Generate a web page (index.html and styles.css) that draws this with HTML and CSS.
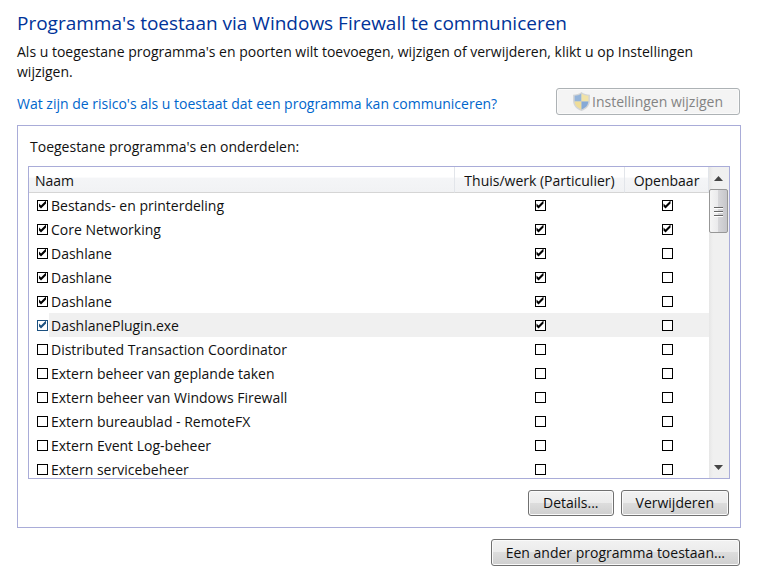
FILE: index.html
```
<!DOCTYPE html>
<html lang="nl">
<head>
    <meta charset="UTF-8">
    <meta name="viewport" content="width=device-width, initial-scale=1.0">
    <title>Windows Firewall</title>
    <link rel="stylesheet" href="styles.css">
</head>
<body>
    <main class="page">
        <h1>Programma's toestaan via Windows Firewall te communiceren</h1>
        <p class="intro">Als u toegestane programma's en poorten wilt toevoegen, wijzigen of verwijderen, klikt u op Instellingen wijzigen.</p>
        <div class="toolbar">
            <a class="help-link" href="#">Wat zijn de risico's als u toestaat dat een programma kan communiceren?</a>
            <button class="btn" id="change" disabled>
                <svg class="shield" width="17" height="19" viewBox="0 0 16 18" aria-hidden="true">
                    <path d="M8 0C6 2 3 2.500 0 2.500V8C0 13 3 16 8 18C13 16 16 13 16 8V2.500C13 2.500 10 2 8 0Z" fill="#d3d5d6"/>
                    <path d="M8 1.500C6 3 4 3.500 1.500 3.500V9H8Z" fill="#94b4da"/>
                    <path d="M8 1.500C10 3 12 3.500 14.500 3.500V9H8Z" fill="#f1e3a8"/>
                    <path d="M1.500 9C2 13 4 15 8 16.500V9Z" fill="#efdd98"/>
                    <path d="M14.500 9C14 13 12 15 8 16.500V9Z" fill="#86a9d6"/>
                </svg>
                <span>Instellingen wijzigen</span>
            </button>
        </div>

        <section class="panel">
            <h2>Toegestane programma's en onderdelen:</h2>
            <div class="list">
                <div class="list-view">
                    <table>
                        <thead>
                            <tr>
                                <th class="name" scope="col">Naam</th>
                                <th class="private" scope="col">Thuis/werk (Particulier)</th>
                                <th class="public" scope="col">Openbaar</th>
                            </tr>
                        </thead>
                        <tbody>
                            <tr>
                                <td><label><input type="checkbox" checked><span>Bestands- en printerdeling</span></label></td>
                                <td><input type="checkbox" aria-label="Thuis/werk" checked></td>
                                <td><input type="checkbox" aria-label="Openbaar" checked></td>
                            </tr>
                            <tr>
                                <td><label><input type="checkbox" checked><span>Core Networking</span></label></td>
                                <td><input type="checkbox" aria-label="Thuis/werk" checked></td>
                                <td><input type="checkbox" aria-label="Openbaar" checked></td>
                            </tr>
                            <tr>
                                <td><label><input type="checkbox" checked><span>Dashlane</span></label></td>
                                <td><input type="checkbox" aria-label="Thuis/werk" checked></td>
                                <td><input type="checkbox" aria-label="Openbaar"></td>
                            </tr>
                            <tr>
                                <td><label><input type="checkbox" checked><span>Dashlane</span></label></td>
                                <td><input type="checkbox" aria-label="Thuis/werk" checked></td>
                                <td><input type="checkbox" aria-label="Openbaar"></td>
                            </tr>
                            <tr>
                                <td><label><input type="checkbox" checked><span>Dashlane</span></label></td>
                                <td><input type="checkbox" aria-label="Thuis/werk" checked></td>
                                <td><input type="checkbox" aria-label="Openbaar"></td>
                            </tr>
                            <tr class="selected">
                                <td><label><input type="checkbox" checked><span>DashlanePlugin.exe</span></label></td>
                                <td><input type="checkbox" aria-label="Thuis/werk" checked></td>
                                <td><input type="checkbox" aria-label="Openbaar"></td>
                            </tr>
                            <tr>
                                <td><label><input type="checkbox"><span>Distributed Transaction Coordinator</span></label></td>
                                <td><input type="checkbox" aria-label="Thuis/werk"></td>
                                <td><input type="checkbox" aria-label="Openbaar"></td>
                            </tr>
                            <tr>
                                <td><label><input type="checkbox"><span>Extern beheer van geplande taken</span></label></td>
                                <td><input type="checkbox" aria-label="Thuis/werk"></td>
                                <td><input type="checkbox" aria-label="Openbaar"></td>
                            </tr>
                            <tr>
                                <td><label><input type="checkbox"><span>Extern beheer van Windows Firewall</span></label></td>
                                <td><input type="checkbox" aria-label="Thuis/werk"></td>
                                <td><input type="checkbox" aria-label="Openbaar"></td>
                            </tr>
                            <tr>
                                <td><label><input type="checkbox"><span>Extern bureaublad - RemoteFX</span></label></td>
                                <td><input type="checkbox" aria-label="Thuis/werk"></td>
                                <td><input type="checkbox" aria-label="Openbaar"></td>
                            </tr>
                            <tr>
                                <td><label><input type="checkbox"><span>Extern Event Log-beheer</span></label></td>
                                <td><input type="checkbox" aria-label="Thuis/werk"></td>
                                <td><input type="checkbox" aria-label="Openbaar"></td>
                            </tr>
                            <tr>
                                <td><label><input type="checkbox"><span>Extern servicebeheer</span></label></td>
                                <td><input type="checkbox" aria-label="Thuis/werk"></td>
                                <td><input type="checkbox" aria-label="Openbaar"></td>
                            </tr>
                        </tbody>
                    </table>
                </div>
                <div class="scrollbar">
                    <button class="arrow" aria-label="Omhoog">
                        <svg width="9" height="5" viewBox="0 0 9 5"><path d="M0 5L4.500 0L9 5Z" fill="#444"/></svg>
                    </button>
                    <div class="thumb">
                        <svg width="9" height="11" viewBox="0 0 9 11"><path d="M0 1.500H9M0 5.500H9M0 9.500H9" stroke="#666"/><path d="M0 2.500H9M0 6.500H9M0 10.500H9" stroke="#fff"/></svg>
                    </div>
                    <button class="arrow down" aria-label="Omlaag">
                        <svg width="9" height="5" viewBox="0 0 9 5"><path d="M0 0L4.500 5L9 0Z" fill="#444"/></svg>
                    </button>
                </div>
            </div>
            <div class="actions">
                <button class="btn">Details...</button>
                <button class="btn">Verwijderen</button>
            </div>
        </section>

        <div class="footer">
            <button class="btn">Een ander programma toestaan...</button>
        </div>
    </main>
</body>
</html>
```
FILE: styles.css
```
* {
    box-sizing: border-box;
}

body {
    margin: 0;
    background-color: #fff;
    color: #111;
    font-family: "Segoe UI", "Open Sans", "Noto Sans", sans-serif;
    font-size: 14px;
    line-height: 20px;
}

.page {
    padding: 10px 32px 14px 17px;
}

h1 {
    margin: 0 0 6px;
    color: #003399;
    font-size: 19px;
    font-weight: normal;
    line-height: 26px;
}

.intro {
    margin: 0 0 6px;
}

.toolbar {
    display: flex;
    justify-content: space-between;
    align-items: center;
    margin: 0 1px 10px 0;
}

.help-link {
    color: #0066cc;
    text-decoration: none;
    padding-top: 4px;
}

.btn {
    display: flex;
    align-items: center;
    justify-content: center;
    height: 27px;
    padding: 0 14px;
    border: 1px solid #707070;
    border-radius: 3px;
    background: linear-gradient(#f2f2f2, #ebebeb 50%, #dddddd 50%, #cfcfcf);
    box-shadow: inset 0 0 0 1px #fafafa;
    color: #111;
    font: inherit;
    white-space: nowrap;
}

.btn:disabled {
    padding: 0 16px;
    border-color: #adb2b5;
    background: #f4f4f4;
    color: #838383;
}

.shield {
    margin-right: 2px;
}

.panel {
    padding: 11px 10px;
    border: 1px solid #a9acd8;
}

h2 {
    margin: 0 2px 9px;
    font-size: 14px;
    font-weight: normal;
    line-height: 20px;
}

.list {
    display: flex;
    height: 313px;
    border: 1px solid #a9acd8;
}

.list-view {
    flex: 1;
    overflow: hidden;
}

table {
    width: 100%;
    border-collapse: separate;
    border-spacing: 0;
    table-layout: fixed;
}

th {
    height: 26px;
    padding: 2px 0 0;
    border-right: 1px solid #e2e5ea;
    border-bottom: 1px solid #d5d5d5;
    background: linear-gradient(#fff 40%, #f4f5f7 45%, #f1f2f4);
    font-weight: normal;
    line-height: 20px;
}

th.name {
    padding-left: 6px;
    text-align: left;
}

th.private {
    width: 170px;
}

th.public {
    width: 84px;
}

td {
    height: 24px;
    padding: 0;
    text-align: center;
    vertical-align: middle;
}

label {
    display: flex;
    align-items: center;
    padding-left: 8px;
    text-align: left;
}

label span {
    flex: 1;
    padding: 2px 0 0 2px;
    line-height: 22px;
}

input[type="checkbox"] {
    appearance: none;
    display: block;
    width: 11px;
    height: 11px;
    margin: 0 auto;
    border: 1px solid #000;
    background-color: #fff;
}

label input[type="checkbox"] {
    margin: 0 1px 0 0;
}

/* tick mark */
input[type="checkbox"]:checked::before {
    content: "";
    display: block;
    width: 9px;
    height: 9px;
    background-color: #000;
    clip-path: polygon(1px 3px, 3px 5px, 8px 0, 8px 3px, 3px 8px, 1px 6px);
}

.selected label span,
.selected td + td {
    background-color: #f0f0f0;
}

.selected label input {
    border-color: #1c5180;
}

.selected label input:checked::before {
    background-color: #1c5180;
}

.scrollbar {
    display: flex;
    flex-direction: column;
    width: 20px;
    padding-right: 1px;
    background: linear-gradient(to right, #e6e6e6, #f0f0f0 20%, #f0f0f0);
}

.arrow {
    display: flex;
    align-items: center;
    justify-content: center;
    height: 22px;
    padding: 0;
    border: none;
    background: none;
}

.arrow.down {
    margin-top: auto;
}

.thumb {
    display: flex;
    align-items: center;
    justify-content: center;
    height: 44px;
    border: 1px solid #979797;
    border-radius: 2px;
    background: linear-gradient(to right, #f5f5f5, #e9e9eb 50%, #d6d6d9 50%, #c6c6ca);
}

.actions {
    display: flex;
    justify-content: flex-end;
    gap: 7px;
    margin: 11px 1px 0 0;
}

.actions .btn {
    height: 26px;
}

.footer {
    display: flex;
    justify-content: flex-end;
    margin: 11px 1px 0 0;
}
```
